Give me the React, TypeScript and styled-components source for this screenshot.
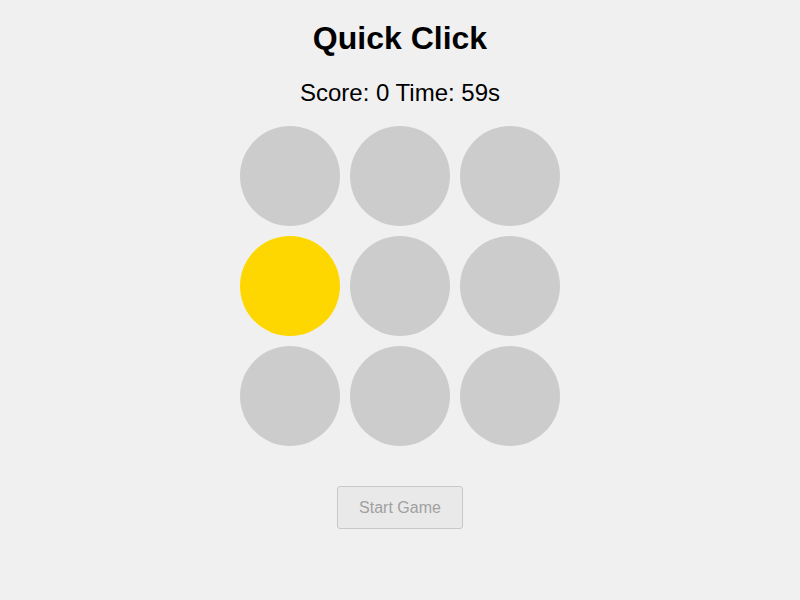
import React, { useState } from "react";
import styled, { createGlobalStyle } from "styled-components";

const GlobalStyle = createGlobalStyle`
    html, body {
        margin: 0;
        padding: 0;
        background: #f0f0f0;
        font-family: "Liberation Sans", Arial, sans-serif;
    }
`

const Game = styled.div`
    display: flex;
    flex-direction: column;
    align-items: center;
    padding-top: 20px;
`

const Title = styled.h1`
    font-size: 32px;
    font-weight: bold;
    margin: 0 0 22px 0;
    color: #000;
`

const Status = styled.div`
    font-size: 24px;
    color: #000;
`

const Board = styled.div`
    display: grid;
    grid-template-columns: repeat(3, 100px);
    gap: 10px;
    margin-top: 19px;
`

const Hole = styled.div<{ $active: boolean }>`
    width: 100px;
    height: 100px;
    border-radius: 50%;
    background: ${(p) => (p.$active ? "#ffd700" : "#cccccc")};
`

const StartButton = styled.button`
    margin-top: 40px;
    width: 126px;
    height: 43px;
    font-family: "Liberation Sans", Arial, sans-serif;
    font-size: 16px;
    color: #a0a0a0;
    background: #e9e9e9;
    border: 1px solid #c8c8c8;
    border-radius: 3px;
`

export default function App() {
    const [score] = useState(0)
    const [time] = useState(59)
    const active = 3

    return (
        <>
            <GlobalStyle />
            <Game>
                <Title>Quick Click</Title>
                <Status>Score: {score} Time: {time}s</Status>
                <Board>
                    {Array.from({ length: 9 }).map((_, i) => (
                        <Hole key={i} $active={i === active} />
                    ))}
                </Board>
                <StartButton disabled>Start Game</StartButton>
            </Game>
        </>
    )
}
